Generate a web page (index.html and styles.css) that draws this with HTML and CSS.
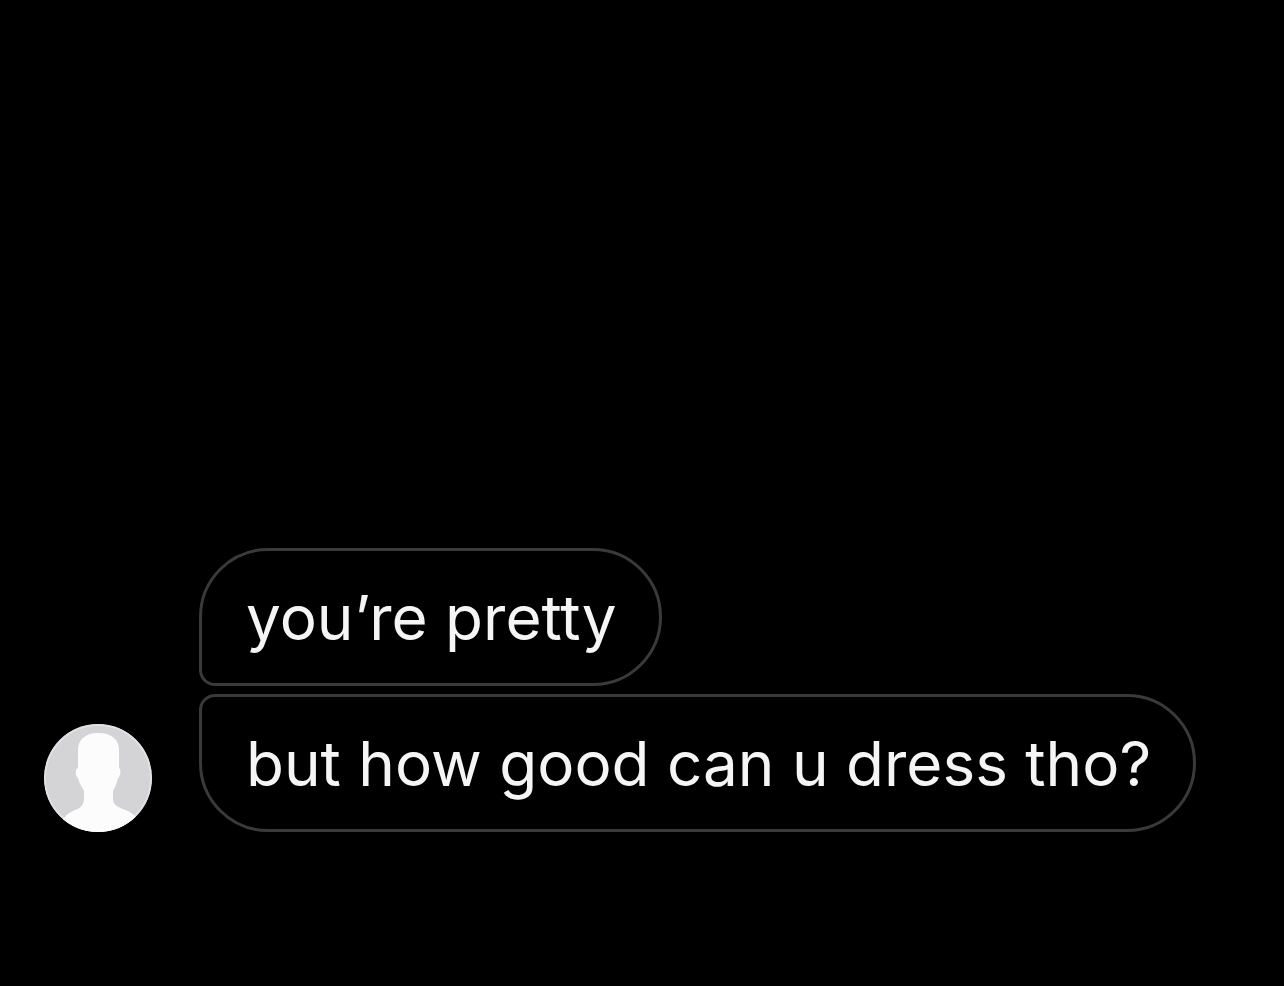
FILE: index.html
```html
<!DOCTYPE html>
<html lang="en">
<head>
  <meta charset="UTF-8">
  <meta name="viewport" content="width=device-width, initial-scale=1.0">
  <title>Chat</title>
  <link rel="stylesheet" href="styles.css">
</head>
<body>
  <main class="chat">
    <div class="group">
      <svg class="avatar" viewBox="0 0 108 108" role="img" aria-label="Profile picture">
        <defs>
          <clipPath id="circle"><circle cx="54" cy="54" r="54"/></clipPath>
        </defs>
        <g clip-path="url(#circle)">
          <rect width="108" height="108" fill="#d4d4d7"/>
          <circle cx="54" cy="54" r="53" fill="none" stroke="#e2e2e4" stroke-width="2"/>
          <path fill="#fcfcfd" d="M54 9C42 9 34 15 34 26V44C31 45 31 52 34 54C35 59 38 63 40 67V76C39 83 34 85 29 87C23 90 17 94 14 108H98C96 94 90 91 84 87C77 84 70 83 69 76V67C71 63 73 59 74 54C77 52 77 45 75 44V26C75 15 67 9 54 9Z"/>
        </g>
      </svg>
      <div class="messages">
        <p class="bubble first">you’re pretty</p>
        <p class="bubble last">but how good can u dress tho?</p>
      </div>
    </div>
  </main>
</body>
</html>
```
FILE: styles.css
```css
* {
  box-sizing: border-box;
}

body {
  margin: 0;
  background: #000;
  color: #f5f5f5;
  font-family: Inter, "Liberation Sans", sans-serif;
}

.chat {
  display: flex;
  flex-direction: column;
  justify-content: flex-end;
  min-height: 100vh;
  padding: 0 44px 154px;
}

.group {
  display: flex;
  align-items: flex-end;
  gap: 47px;
}

.avatar {
  flex: none;
  width: 108px;
  height: 108px;
}

.messages {
  display: flex;
  flex-direction: column;
  align-items: flex-start;
  gap: 8px;
}

.bubble {
  margin: 0;
  padding: 31px 42px 29px 44px;
  border: 3px solid #3a3a3a;
  border-radius: 69px;
  font-size: 62px;
  line-height: 72px;
}

.first {
  border-bottom-left-radius: 16px;
}

.last {
  border-top-left-radius: 16px;
}
```
